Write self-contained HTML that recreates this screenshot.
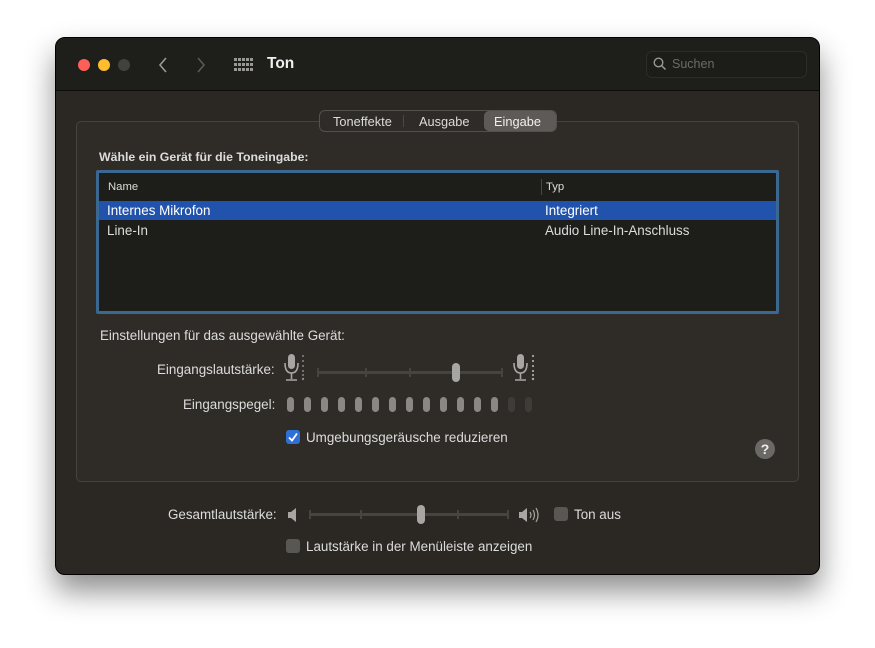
<!DOCTYPE html>
<html><head><meta charset="utf-8"><style>
*{margin:0;padding:0;box-sizing:border-box}
body{width:875px;height:648px;background:#fff;font-family:"Liberation Sans",sans-serif;position:relative;overflow:hidden;color:#dcdcdc;font-size:13.4px}
.a{position:absolute}
.win{left:55px;top:37px;width:765px;height:538px;border-radius:10px;background:#2b2824;border:1px solid #000;box-shadow:0 16px 30px rgba(0,0,0,.45);overflow:hidden}
.tb{left:0;top:0;width:100%;height:53px;background:#1e1e1b;border-bottom:1px solid #0c0c0b}
.dot{width:12px;height:12px;border-radius:50%;top:21px}
.t{white-space:nowrap}
.lvl{width:7px;height:15px;border-radius:3.5px;background:#8a8885;top:397px}
.cb{width:14px;height:14px;border-radius:3px;background:#595754}
</style></head><body>
<div class="a win">
 <div class="a tb">
  <div class="a dot" style="left:22px;background:#fe5f57"></div>
  <div class="a dot" style="left:42px;background:#febc2e"></div>
  <div class="a dot" style="left:62px;background:#414140"></div>
  <svg class="a" style="left:100px;top:17px" width="14" height="20"><path d="M10 3 L4 10 L10 17" stroke="#9a9893" stroke-width="1.6" fill="none"/></svg>
  <svg class="a" style="left:138px;top:17px" width="14" height="20"><path d="M4 3 L10 10 L4 17" stroke="#5a5955" stroke-width="1.6" fill="none"/></svg>
  <svg class="a" style="left:178px;top:20px" width="20" height="14"><g fill="#9a9893">
   <rect x="0" y="0" width="3" height="3"/><rect x="4" y="0" width="3" height="3"/><rect x="8" y="0" width="3" height="3"/><rect x="12" y="0" width="3" height="3"/><rect x="16" y="0" width="3" height="3"/>
   <rect x="0" y="5" width="3" height="3"/><rect x="4" y="5" width="3" height="3"/><rect x="8" y="5" width="3" height="3"/><rect x="12" y="5" width="3" height="3"/><rect x="16" y="5" width="3" height="3"/>
   <rect x="0" y="10" width="3" height="3"/><rect x="4" y="10" width="3" height="3"/><rect x="8" y="10" width="3" height="3"/><rect x="12" y="10" width="3" height="3"/><rect x="16" y="10" width="3" height="3"/></g></svg>
  <div class="a t" style="left:211px;top:17px;font-size:15.5px;font-weight:bold;color:#f0f0f0">Ton</div>
  <div class="a" style="left:590px;top:13px;width:161px;height:27px;border:1px solid #2c2c29;border-radius:6px;background:#1c1c19"></div>
  <svg class="a" style="left:597px;top:19px" width="14" height="14"><circle cx="5.5" cy="5.5" r="4.3" stroke="#9a9893" stroke-width="1.4" fill="none"/><path d="M8.6 8.6 L12.5 12.5" stroke="#9a9893" stroke-width="1.5"/></svg>
  <div class="a t" style="left:616px;top:19px;font-size:12.5px;color:#6d6b67">Suchen</div>
 </div>
 <div class="a" style="left:20px;top:83px;width:723px;height:361px;border:1px solid #46433f;border-radius:5px;background:#2f2c28"></div>
 <div class="a" style="left:263px;top:72px;width:238px;height:22px;border:1px solid #54514d;border-radius:6px;background:#2e2b28"></div>
 <div class="a" style="left:428px;top:73px;width:72px;height:20px;border-radius:5px;background:#5d5a57"></div>
 <div class="a" style="left:347px;top:77px;width:1px;height:12px;background:#4a4844"></div>
 <div class="a t" style="left:277px;top:76px;font-size:12.8px;color:#dcdcdc">Toneffekte</div>
 <div class="a t" style="left:363px;top:76px;font-size:12.8px;color:#dcdcdc">Ausgabe</div>
 <div class="a t" style="left:438px;top:76px;font-size:12.8px;color:#f0f0f0">Eingabe</div>
 <div class="a t" style="left:43px;top:112px;font-size:12.3px;font-weight:bold;color:#dcdcdc">Wähle ein Gerät für die Toneingabe:</div>
 <div class="a" style="left:40px;top:132px;width:683px;height:144px;border:3px solid #3b6891;border-radius:2px;background:#1d1d1a"></div>
 <div class="a" style="left:485px;top:141px;width:1px;height:16px;background:#4a4844"></div>
 <div class="a t" style="left:52px;top:143px;font-size:11.3px;color:#dcdcdc">Name</div>
 <div class="a t" style="left:490px;top:143px;font-size:11.3px;color:#dcdcdc">Typ</div>
 <div class="a" style="left:43px;top:163px;width:677px;height:19px;background:#2253ac"></div>
 <div class="a t" style="left:51px;top:165px;color:#fff">Internes Mikrofon</div>
 <div class="a t" style="left:489px;top:165px;color:#fff">Integriert</div>
 <div class="a t" style="left:51px;top:185px;color:#dcdcdc">Line-In</div>
 <div class="a t" style="left:489px;top:185px;color:#dcdcdc">Audio Line-In-Anschluss</div>
 <div class="a t" style="left:44px;top:290px;color:#dcdcdc">Einstellungen für das ausgewählte Gerät:</div>
 <div class="a t" style="left:101px;top:324px;color:#dcdcdc">Eingangslautstärke:</div>
 <div class="a t" style="left:127px;top:359px;color:#dcdcdc">Eingangspegel:</div>
</div>
<svg class="a" style="left:282px;top:353px" width="24" height="30"><rect x="6" y="1" width="7" height="15" rx="3.5" fill="#a8a6a3"/><path d="M3 10 Q3 20 9.5 20 Q16 20 16 10" stroke="#a8a6a3" stroke-width="1.6" fill="none"/><path d="M9.5 20 V26 M4 27 H15" stroke="#a8a6a3" stroke-width="1.6"/><g fill="#8a8885"><circle cx="21" cy="3" r="1"/><circle cx="21" cy="8" r="1"/><circle cx="21" cy="13" r="1"/><circle cx="21" cy="18" r="1"/><circle cx="21" cy="22" r="1"/><circle cx="21" cy="26" r="1.2"/></g></svg>
<svg class="a" style="left:511px;top:353px" width="26" height="30"><rect x="6" y="1" width="7" height="15" rx="3.5" fill="#a8a6a3"/><path d="M3 10 Q3 20 9.5 20 Q16 20 16 10" stroke="#a8a6a3" stroke-width="1.6" fill="none"/><path d="M9.5 20 V26 M4 27 H15" stroke="#a8a6a3" stroke-width="1.6"/><g fill="#a8a6a3"><circle cx="22" cy="3" r="1.1"/><circle cx="22" cy="8" r="1.1"/><circle cx="22" cy="13" r="1.1"/><circle cx="22" cy="18" r="1.1"/><circle cx="22" cy="22" r="1.1"/><circle cx="22" cy="26" r="1.2"/></g></svg>
<div class="a" style="left:318px;top:371px;width:185px;height:3px;background:#464440"></div>
<div class="a" style="left:317px;top:368px;width:2px;height:9px;background:#464440"></div>
<div class="a" style="left:365px;top:368px;width:2px;height:9px;background:#464440"></div>
<div class="a" style="left:409px;top:368px;width:2px;height:9px;background:#464440"></div>
<div class="a" style="left:501px;top:368px;width:2px;height:9px;background:#464440"></div>
<div class="a" style="left:452px;top:363px;width:8px;height:19px;border-radius:4px;background:#a8a6a3"></div>
<div class="a lvl" style="left:287px"></div><div class="a lvl" style="left:304px"></div><div class="a lvl" style="left:321px"></div><div class="a lvl" style="left:338px"></div><div class="a lvl" style="left:355px"></div><div class="a lvl" style="left:372px"></div><div class="a lvl" style="left:389px"></div><div class="a lvl" style="left:406px"></div><div class="a lvl" style="left:423px"></div><div class="a lvl" style="left:440px"></div><div class="a lvl" style="left:457px"></div><div class="a lvl" style="left:474px"></div><div class="a lvl" style="left:491px"></div><div class="a lvl" style="left:508px;background:#3e3c39"></div><div class="a lvl" style="left:525px;background:#3e3c39"></div>
<div class="a cb" style="left:286px;top:430px;background:#2f6fd6"></div>
<svg class="a" style="left:286px;top:430px" width="14" height="14"><path d="M3 7.5 L6 10.5 L11 3.5" stroke="#fff" stroke-width="1.8" fill="none"/></svg>
<div class="a t" style="left:306px;top:430px;color:#dcdcdc">Umgebungsgeräusche reduzieren</div>
<div class="a" style="left:755px;top:439px;width:20px;height:20px;border-radius:50%;background:#6b6966;color:#eee;font-weight:bold;font-size:14px;text-align:center;line-height:20px">?</div>
<div class="a t" style="left:168px;top:507px;color:#dcdcdc">Gesamtlautstärke:</div>
<svg class="a" style="left:287px;top:507px" width="12" height="16"><path d="M1 5 H4 L9 1 V15 L4 11 H1 Z" fill="#a8a6a3"/></svg>
<div class="a" style="left:310px;top:513px;width:199px;height:3px;background:#464440"></div>
<div class="a" style="left:309px;top:510px;width:2px;height:9px;background:#464440"></div>
<div class="a" style="left:360px;top:510px;width:2px;height:9px;background:#464440"></div>
<div class="a" style="left:457px;top:510px;width:2px;height:9px;background:#464440"></div>
<div class="a" style="left:507px;top:510px;width:2px;height:9px;background:#464440"></div>
<div class="a" style="left:417px;top:505px;width:8px;height:19px;border-radius:4px;background:#a8a6a3"></div>
<svg class="a" style="left:518px;top:506px" width="24" height="18"><path d="M1 6 H4 L9 2 V16 L4 12 H1 Z" fill="#a8a6a3"/><path d="M12 6 Q14 9 12 12 M15 4 Q18 9 15 14 M18 2 Q22 9 18 16" stroke="#a8a6a3" stroke-width="1.2" fill="none"/></svg>
<div class="a cb" style="left:554px;top:507px"></div>
<div class="a t" style="left:574px;top:507px;color:#dcdcdc">Ton aus</div>
<div class="a cb" style="left:286px;top:539px"></div>
<div class="a t" style="left:306px;top:539px;color:#dcdcdc">Lautstärke in der Menüleiste anzeigen</div>
</body></html>
